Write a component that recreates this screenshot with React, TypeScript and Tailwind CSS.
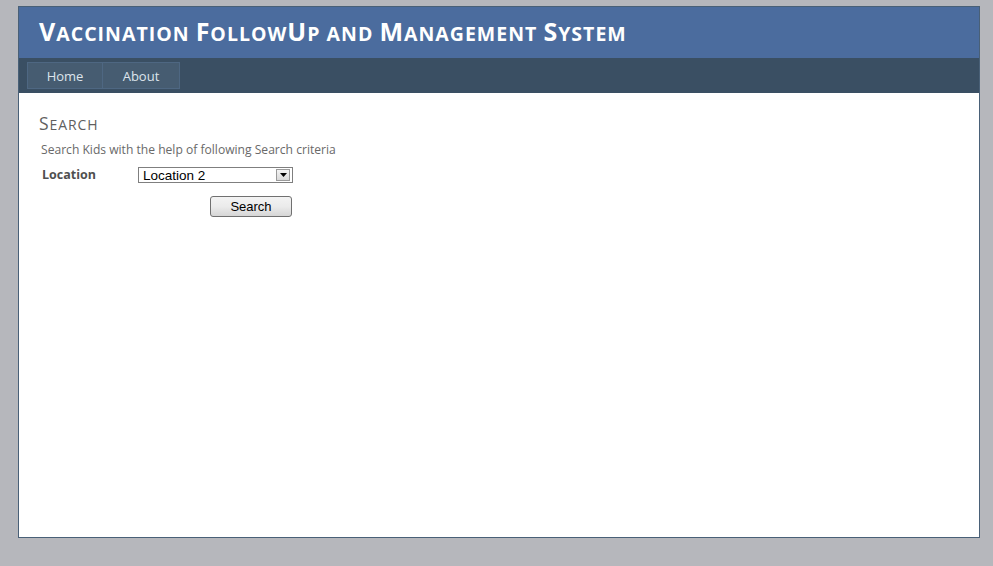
import React from 'react';

/**
 * App - Vaccination FollowUp search page
 */
const navItems = ['Home', 'About'];

// Renders text as manual small caps: capitals at full size, the rest as smaller uppercase
const SmallCaps: React.FC<{ text: string; big: string; small: string }> = ({ text, big, small }) => (
  <>
    {text.split('').map((ch, i) =>
      ch === ' ' ? (
        <span key={i} className={small}> </span>
      ) : ch === ch.toUpperCase() ? (
        <span key={i} className={big}>{ch}</span>
      ) : (
        <span key={i} className={small}>{ch.toUpperCase()}</span>
      )
    )}
  </>
);

export default function App() {
  return (
    <div className="min-h-[566px] w-full bg-[#b6b7bc] pt-[6px] pb-[29px]" style={{ fontFamily: '"Open Sans", "Noto Sans", sans-serif' }}>
      <div className="ml-[18px] w-[962px] border border-[#496077] bg-white">
        {/* Header */}
        <div className="h-[51px] bg-[#4b6c9e] pl-[20px] pt-[10px]">
          <h1 className="font-bold leading-[28px] tracking-[1px] text-white">
            <SmallCaps text="Vaccination FollowUp and Management System" big="text-[25px]" small="text-[19.5px]" />
          </h1>
        </div>

        {/* Menu bar */}
        <div className="flex h-[35px] items-start bg-[#3a4f63] pl-[8px] pt-[4px]">
          {navItems.map(item => (
            <div
              key={item}
              className={`flex h-[27px] items-center justify-center border border-[#4e6782] bg-[#465c71] pt-[2px] text-[13px] text-[#dde4ec] ${
                item === 'Home' ? 'w-[76px]' : 'w-[77px] border-l-0'
              }`}
            >
              {item}
            </div>
          ))}
        </div>

        {/* Main content */}
        <div className="h-[444px] px-[20px] pt-[19px]">
          <h2 className="leading-[22px] tracking-[0.9px] text-[#5f5f5f]">
            <SmallCaps text="Search" big="text-[17.5px]" small="text-[14px]" />
          </h2>
          <p className="mt-[5px] pl-[2px] text-[12.1px] leading-[18px] text-[#696969]">
            Search Kids with the help of following Search criteria
          </p>

          <div className="mt-[7px] flex items-center">
            <label className="w-[99px] pl-[3px] text-[12.5px] font-bold text-[#4f4f4f]">Location</label>
            <div className="flex h-[16px] w-[155px] items-center border border-[#7f7f7f] bg-white pl-[4px] pr-[2px]">
              <span className="flex-1 pt-[2px] text-[13.5px] leading-[14px] text-black" style={{ fontFamily: '"Liberation Sans", Arial, sans-serif' }}>
                Location 2
              </span>
              <span className="flex h-[12px] w-[14px] items-center justify-center border border-[#9a9a9a] bg-gradient-to-b from-[#f4f4f4] to-[#d9d9d9]">
                <svg width="7" height="4" viewBox="0 0 7 4" aria-hidden="true">
                  <path d="M0 0h7L3.5 4z" fill="#000" />
                </svg>
              </span>
            </div>
          </div>

          <div className="mt-[8px] pl-[171px]">
            <button
              type="button"
              className="h-[21px] w-[82px] rounded-[3px] border border-[#707070] bg-gradient-to-b from-[#f3f3f3] via-[#ebebeb] to-[#d6d6d6] text-[13px] leading-[18px] text-black"
              style={{ fontFamily: '"Liberation Sans", Arial, sans-serif' }}
            >
              Search
            </button>
          </div>
        </div>
      </div>
    </div>
  );
}
